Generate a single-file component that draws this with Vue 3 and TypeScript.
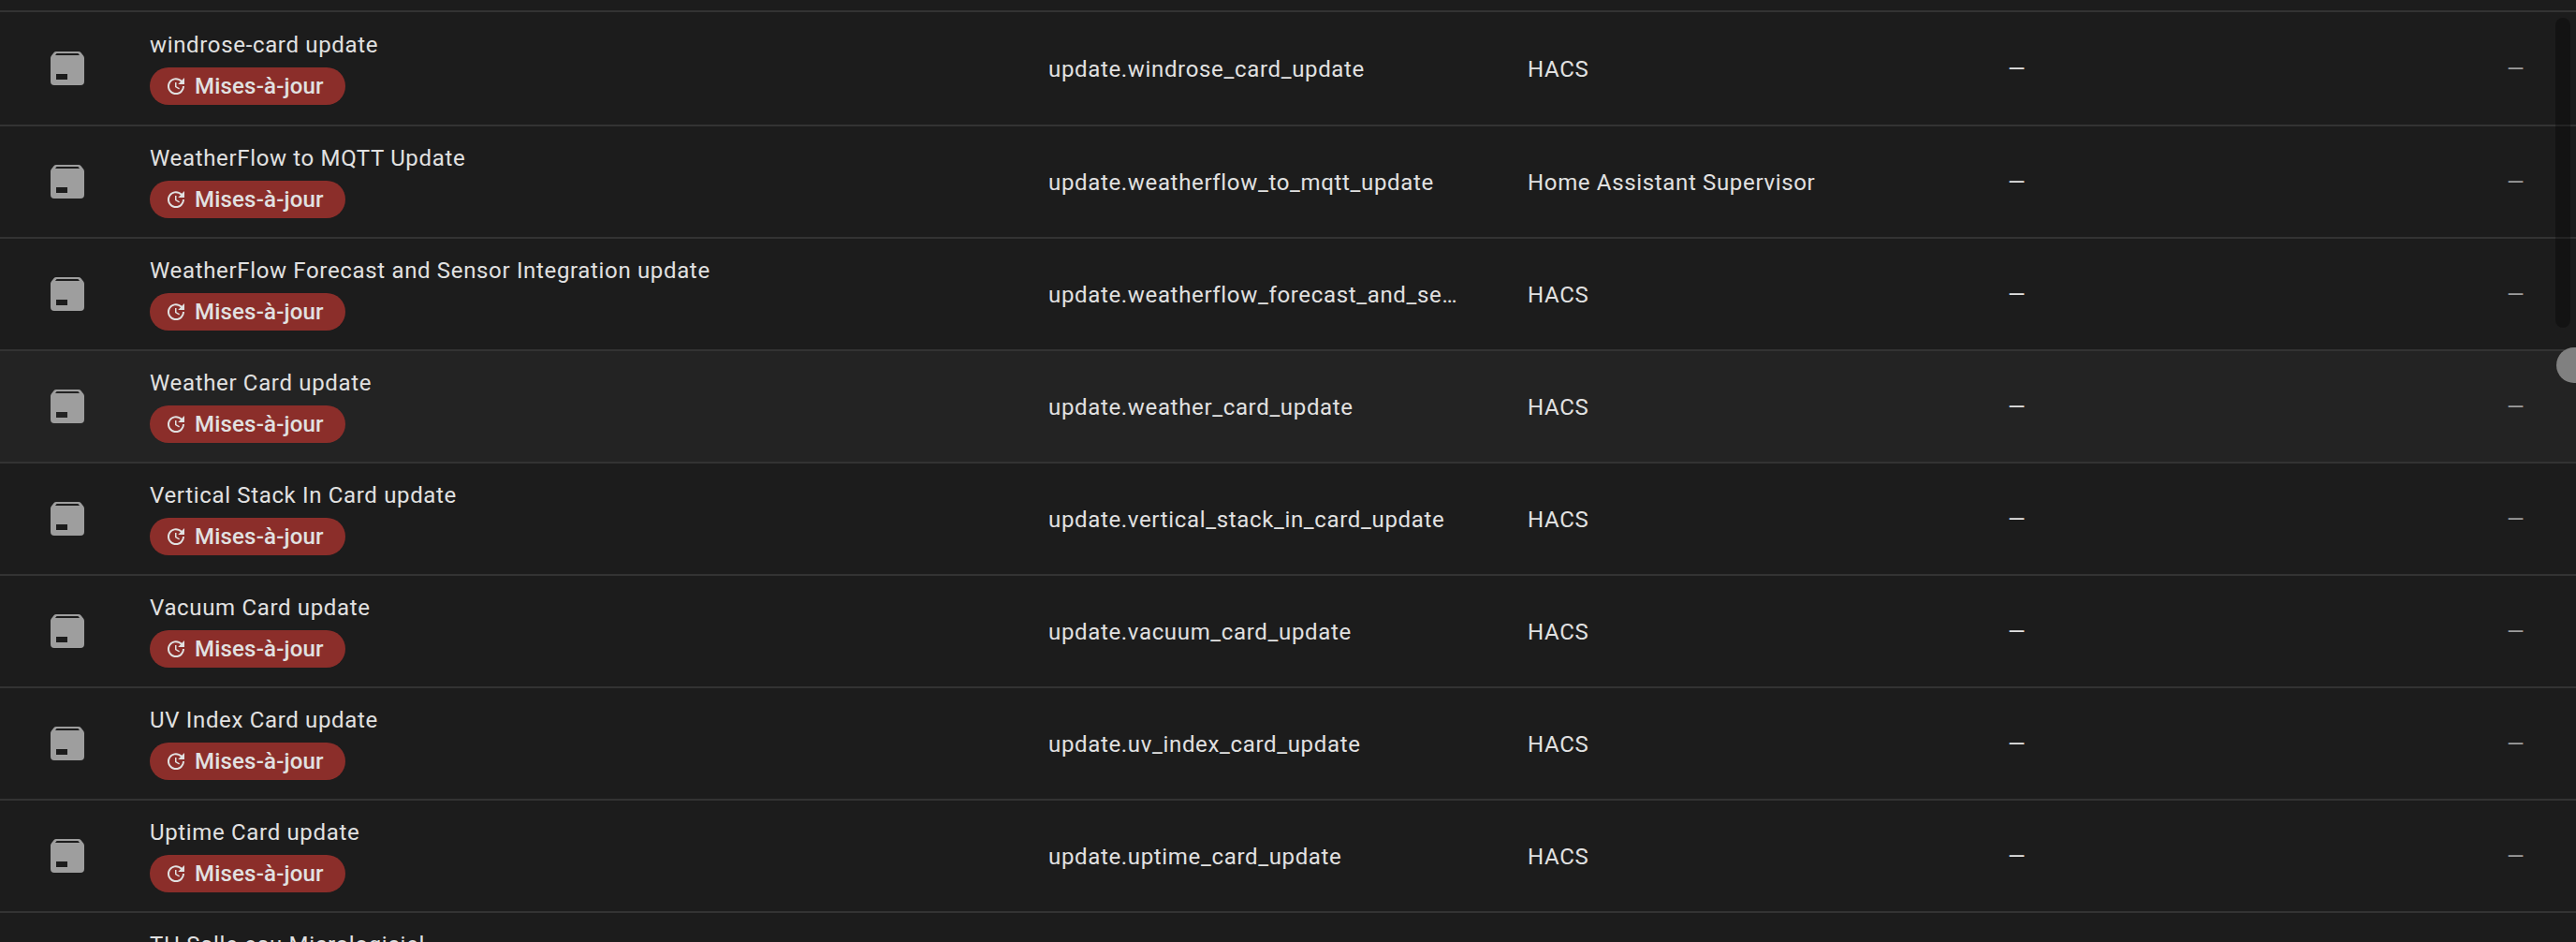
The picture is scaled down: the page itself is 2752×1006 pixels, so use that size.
<script setup lang="ts">
interface Row {
  name: string
  entity: string
  integration: string
}

const rows: Row[] = [
  { name: 'windrose-card update', entity: 'update.windrose_card_update', integration: 'HACS' },
  { name: 'WeatherFlow to MQTT Update', entity: 'update.weatherflow_to_mqtt_update', integration: 'Home Assistant Supervisor' },
  { name: 'WeatherFlow Forecast and Sensor Integration update', entity: 'update.weatherflow_forecast_and_sensor_integration_update', integration: 'HACS' },
  { name: 'Weather Card update', entity: 'update.weather_card_update', integration: 'HACS' },
  { name: 'Vertical Stack In Card update', entity: 'update.vertical_stack_in_card_update', integration: 'HACS' },
  { name: 'Vacuum Card update', entity: 'update.vacuum_card_update', integration: 'HACS' },
  { name: 'UV Index Card update', entity: 'update.uv_index_card_update', integration: 'HACS' },
  { name: 'Uptime Card update', entity: 'update.uptime_card_update', integration: 'HACS' },
  { name: 'TH Salle eau Micrologiciel', entity: 'update.th_salle_eau_micrologiciel', integration: 'ZHA' },
]
</script>

<template>
  <div class="page">
    <div class="top"></div>
    <div v-for="(row, i) in rows" :key="row.entity" class="row" :class="{ hover: i === 3, first: i === 0 }">
      <div class="icon-cell">
        <svg class="pkg" viewBox="0 0 24 24"><path fill-rule="evenodd" d="M5.5,5L6.3,4H17.7L18.5,5H5.5M20.54,5.23L19.15,3.55C18.88,3.21 18.47,3 18,3H6C5.53,3 5.12,3.21 4.84,3.55L3.46,5.23C3.17,5.57 3,6 3,6.5V19A2,2 0 0,0 5,21H19A2,2 0 0,0 21,19V6.5C21,6 20.83,5.57 20.54,5.23M6,18V15H12V18H6Z" /></svg>
      </div>
      <div class="name-cell">
        <div class="name">{{ row.name }}</div>
        <div class="badge">
          <svg class="upd" viewBox="0 0 24 24"><path d="M21,10.12H14.22L16.96,7.3C14.23,4.6 9.81,4.5 7.08,7.2C4.35,9.91 4.35,14.28 7.08,17C9.81,19.7 14.23,19.7 16.96,17C18.32,15.65 19,14.08 19,12.1H21C21,14.08 20.12,16.65 18.36,18.39C14.85,21.87 9.15,21.87 5.64,18.39C2.14,14.92 2.11,9.28 5.62,5.81C9.13,2.34 14.76,2.34 18.27,5.81L21,3V10.12M12.5,8V12.25L16,14.33L15.28,15.54L11,13V8H12.5Z" /></svg>
          <span class="badge-text">Mises-à-jour</span>
        </div>
      </div>
      <div class="entity-cell"><span class="ellipsis">{{ row.entity }}</span></div>
      <div class="text-cell">{{ row.integration }}</div>
      <div class="text-cell">—</div>
      <div class="text-cell last-cell">—</div>
    </div>
    <div class="scroll-track"></div>
    <div class="scroll-thumb"></div>
  </div>
</template>

<style>
html, body { margin: 0; background: #1c1c1c; overflow: hidden; }
</style>

<style scoped>
.page {
  position: relative;
  width: 2752px;
  height: 1006px;
  overflow: hidden;
  background: #1c1c1c;
  color: #e1e1e1;
  font-family: Roboto, sans-serif;
  font-size: 24px;
  letter-spacing: 0.66px;
}
.top {
  height: 11px;
  border-bottom: 2px solid #333333;
}
.row {
  display: grid;
  grid-template-columns: 160px 960px 512px 513px 1fr 74px;
  height: 118px;
  border-bottom: 2px solid #333333;
  align-items: center;
}
.row.first { height: 120px; }
.row.hover { background: #232323; }
.icon-cell { display: flex; justify-content: center; padding-right: 16px; }
.pkg { width: 48px; height: 48px; fill: #9e9e9e; }
.name-cell {
  display: flex;
  flex-direction: column;
  gap: 8px;
  align-items: flex-start;
  padding-bottom: 3px;
}
.name { line-height: 32px; height: 32px; }
.badge {
  display: flex;
  align-items: center;
  gap: 8px;
  height: 40px;
  padding: 0 23px 0 16px;
  border-radius: 20px;
  background: #8b2e2a;
}
.badge-text { font-weight: 500; letter-spacing: 0.2px; }
.upd { width: 24px; height: 24px; fill: #e1e1e1; }
.entity-cell { padding: 2px 72px 0 0; overflow: hidden; }
.text-cell { padding-top: 2px; }
.ellipsis { display: block; overflow: hidden; white-space: nowrap; text-overflow: ellipsis; }
.last-cell { color: #9e9e9e; }
.scroll-track {
  position: absolute;
  left: 2730px;
  top: 19px;
  width: 16px;
  height: 331px;
  border-radius: 8px;
  background: rgba(0, 0, 0, 0.3);
}
.scroll-thumb {
  position: absolute;
  left: 2731px;
  top: 371px;
  width: 38px;
  height: 38px;
  border-radius: 50%;
  background: #808080;
}
</style>
